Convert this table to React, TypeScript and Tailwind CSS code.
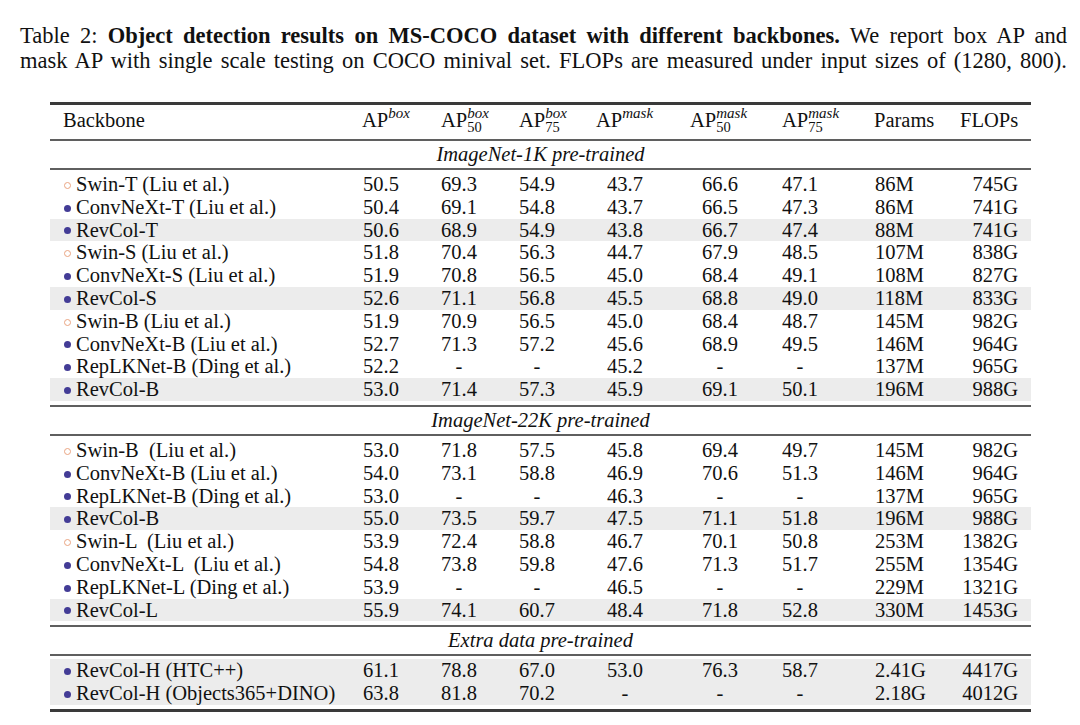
import React from 'react';

type Row = {
  name: string;
  kind: 'swin' | 'ours' | 'other';
  v: string[];
  params: string;
  flops: string;
  hl?: boolean;
};

const sections: { title: string; rows: Row[] }[] = [
  {
    title: 'ImageNet-1K pre-trained',
    rows: [
      { name: 'Swin-T (Liu et al.)', kind: 'swin', v: ['50.5', '69.3', '54.9', '43.7', '66.6', '47.1'], params: '86M', flops: '745G' },
      { name: 'ConvNeXt-T (Liu et al.)', kind: 'other', v: ['50.4', '69.1', '54.8', '43.7', '66.5', '47.3'], params: '86M', flops: '741G' },
      { name: 'RevCol-T', kind: 'ours', v: ['50.6', '68.9', '54.9', '43.8', '66.7', '47.4'], params: '88M', flops: '741G', hl: true },
      { name: 'Swin-S (Liu et al.)', kind: 'swin', v: ['51.8', '70.4', '56.3', '44.7', '67.9', '48.5'], params: '107M', flops: '838G' },
      { name: 'ConvNeXt-S (Liu et al.)', kind: 'other', v: ['51.9', '70.8', '56.5', '45.0', '68.4', '49.1'], params: '108M', flops: '827G' },
      { name: 'RevCol-S', kind: 'ours', v: ['52.6', '71.1', '56.8', '45.5', '68.8', '49.0'], params: '118M', flops: '833G', hl: true },
      { name: 'Swin-B (Liu et al.)', kind: 'swin', v: ['51.9', '70.9', '56.5', '45.0', '68.4', '48.7'], params: '145M', flops: '982G' },
      { name: 'ConvNeXt-B (Liu et al.)', kind: 'other', v: ['52.7', '71.3', '57.2', '45.6', '68.9', '49.5'], params: '146M', flops: '964G' },
      { name: 'RepLKNet-B (Ding et al.)', kind: 'other', v: ['52.2', '-', '-', '45.2', '-', '-'], params: '137M', flops: '965G' },
      { name: 'RevCol-B', kind: 'ours', v: ['53.0', '71.4', '57.3', '45.9', '69.1', '50.1'], params: '196M', flops: '988G', hl: true },
    ],
  },
  {
    title: 'ImageNet-22K pre-trained',
    rows: [
      { name: 'Swin-B  (Liu et al.)', kind: 'swin', v: ['53.0', '71.8', '57.5', '45.8', '69.4', '49.7'], params: '145M', flops: '982G' },
      { name: 'ConvNeXt-B (Liu et al.)', kind: 'other', v: ['54.0', '73.1', '58.8', '46.9', '70.6', '51.3'], params: '146M', flops: '964G' },
      { name: 'RepLKNet-B (Ding et al.)', kind: 'other', v: ['53.0', '-', '-', '46.3', '-', '-'], params: '137M', flops: '965G' },
      { name: 'RevCol-B', kind: 'ours', v: ['55.0', '73.5', '59.7', '47.5', '71.1', '51.8'], params: '196M', flops: '988G', hl: true },
      { name: 'Swin-L  (Liu et al.)', kind: 'swin', v: ['53.9', '72.4', '58.8', '46.7', '70.1', '50.8'], params: '253M', flops: '1382G' },
      { name: 'ConvNeXt-L  (Liu et al.)', kind: 'other', v: ['54.8', '73.8', '59.8', '47.6', '71.3', '51.7'], params: '255M', flops: '1354G' },
      { name: 'RepLKNet-L (Ding et al.)', kind: 'other', v: ['53.9', '-', '-', '46.5', '-', '-'], params: '229M', flops: '1321G' },
      { name: 'RevCol-L', kind: 'ours', v: ['55.9', '74.1', '60.7', '48.4', '71.8', '52.8'], params: '330M', flops: '1453G', hl: true },
    ],
  },
  {
    title: 'Extra data pre-trained',
    rows: [
      { name: 'RevCol-H (HTC++)', kind: 'ours', v: ['61.1', '78.8', '67.0', '53.0', '76.3', '58.7'], params: '2.41G', flops: '4417G', hl: true },
      { name: 'RevCol-H (Objects365+DINO)', kind: 'ours', v: ['63.8', '81.8', '70.2', '-', '-', '-'], params: '2.18G', flops: '4012G', hl: true },
    ],
  },
];

const GRID = 'grid grid-cols-[312px_79px_78px_77px_94px_92px_92px_86px_71px]';
const PAD = ['pl-[1px]', 'pl-0', 'pl-0', 'pl-[11px]', 'pl-[12px]', 'pl-0'];

const Bullet = ({ kind }: { kind: Row['kind'] }) =>
  kind === 'swin' ? (
    <span className="inline-block align-middle w-[7px] h-[7px] rounded-full border-[1.5px] border-[#eaa582] mr-[5px] -mt-[2px]" />
  ) : (
    <span className="inline-block align-middle w-[7px] h-[7px] rounded-full bg-[#433c96] mr-[5px] -mt-[2px]" />
  );

const Sup = ({ sup, sub }: { sup: string; sub?: string }) => (
  <>
    {sub && <span className="relative top-[5px] text-[14.5px] leading-[0]">{sub}</span>}
    <span className={`relative top-[-9px] text-[15px] leading-[0] italic ${sub ? 'ml-[-14.5px]' : ''}`}>{sup}</span>
  </>
);

const Rule = ({ thick }: { thick?: boolean }) =>
  thick ? <div className="h-[3px] bg-[#3a3a3a]" /> : <div className="h-[2px] bg-[#5f5f5f]" />;

export default function App() {
  return (
    <div className="w-[1080px] h-[725px] bg-white text-[#111] font-['Liberation_Serif','Times_New_Roman',serif] text-[20.5px]">
      <div className="pt-[23px] pl-[20px] w-[1067px] leading-[25px] text-[22.5px]">
        <div className="text-justify [text-align-last:justify] whitespace-nowrap">
          Table 2: <b>Object detection results on MS-COCO dataset with different backbones.</b> We report box AP and
        </div>
        <div className="text-justify [text-align-last:justify] whitespace-nowrap">
          mask AP with single scale testing on COCO minival set. FLOPs are measured under input sizes of (1280, 800).
        </div>
      </div>

      <div className="ml-[50px] w-[981px] mt-[29px]">
        <Rule thick />
        <div className={`${GRID} h-[34px] pt-[4px] leading-[22.8px]`}>
          <div className="pl-[13px]">Backbone</div>
          <div>AP<Sup sup="box" /></div>
          <div>AP<Sup sup="box" sub="50" /></div>
          <div>AP<Sup sup="box" sub="75" /></div>
          <div>AP<Sup sup="mask" /></div>
          <div>AP<Sup sup="mask" sub="50" /></div>
          <div>AP<Sup sup="mask" sub="75" /></div>
          <div>Params</div>
          <div>FLOPs</div>
        </div>

        {sections.map((s) => (
          <div key={s.title}>
            <Rule />
            <div className="h-[27px] leading-[27px] text-center italic">{s.title}</div>
            <Rule />
            <div className="pt-[3px] pb-[4px]">
              {s.rows.map((r, i) => (
                <div key={i} className={`${GRID} h-[22.8px] leading-[22.8px] ${r.hl ? 'bg-[#ececec]' : ''}`}>
                  <div className="pl-[14px] whitespace-pre">
                    <Bullet kind={r.kind} />
                    {r.name}
                  </div>
                  {r.v.map((x, j) => (
                    <div key={j} className={PAD[j]}>
                      <span className="inline-block w-[36px] text-center">{x}</span>
                    </div>
                  ))}
                  <div className="pl-[1px]">{r.params}</div>
                  <div className="text-right pr-[13px]">{r.flops}</div>
                </div>
              ))}
            </div>
          </div>
        ))}
        <Rule thick />
      </div>
    </div>
  );
}
